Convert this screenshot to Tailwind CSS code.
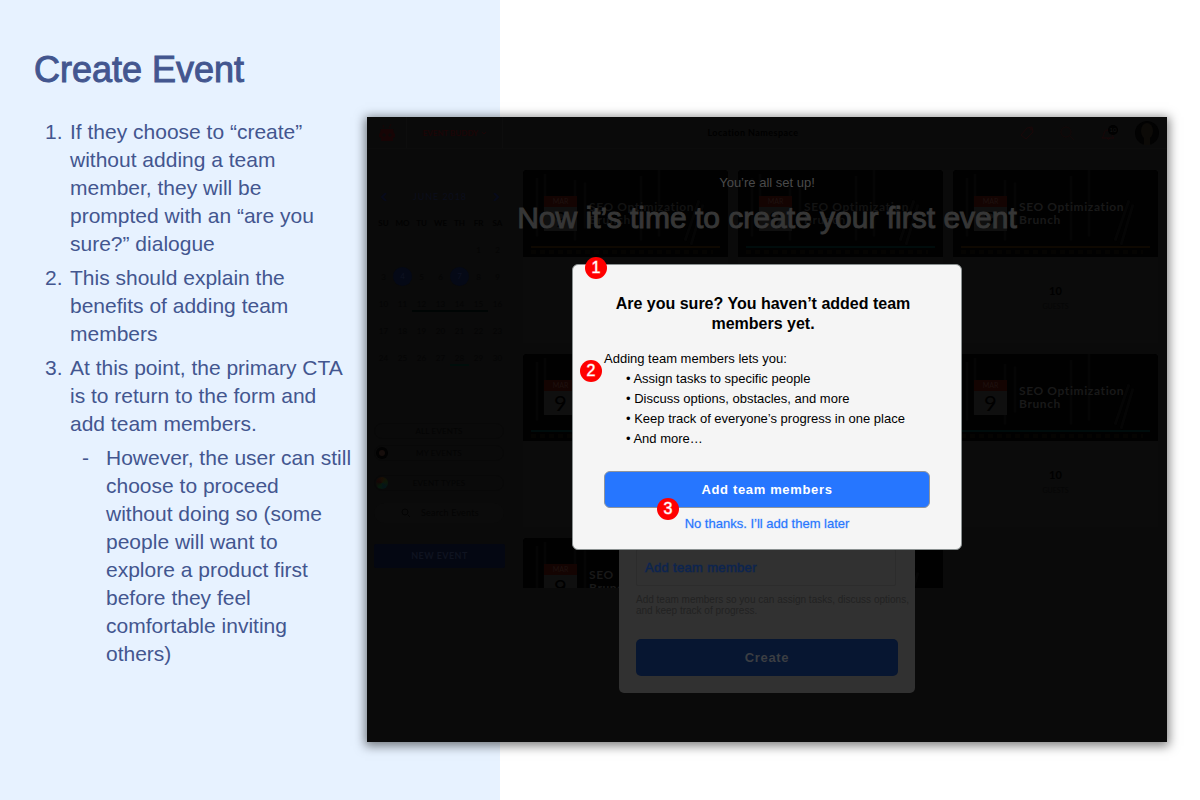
<!DOCTYPE html>
<html lang="en">
<head>
<meta charset="utf-8">
<meta name="viewport" content="width=device-width, initial-scale=1">
<title>Create Event</title>
<script src="https://cdn.jsdelivr.net/npm/@tailwindcss/browser@4"></script>
</head>
<body class="bg-white font-['Liberation_Sans',sans-serif]">
<svg class="hidden" aria-hidden="true">
  <symbol id="shelves" viewBox="0 0 205 86" preserveAspectRatio="none">
    <path d="M0 0H205V86H0Z" fill="#010101"/>
    <path d="M14 8V66M22 4V60M52 10V70M62 12V58M118 6V70M136 0V66M176 30L162 70M180 34L168 74" stroke="#050505" stroke-width="3" fill="none"/>
    <path d="M8 81H190" stroke="#050402" stroke-width="4" stroke-dasharray="5 4" fill="none"/>
  </symbol>
</svg>
<div class="relative flex min-h-screen items-start">
  <div class="absolute inset-y-0 left-0 w-5/12 bg-[#e7f2ff]"></div>

  <aside class="relative w-[367px] shrink-0 pt-12 pb-8 text-[#43568f]">
    <h1 class="pl-[34px] text-4xl leading-[44px] [-webkit-text-stroke:1px_#43568f]">Create Event</h1>
    <ol class="mt-[26px] space-y-[6px] pl-[45px] text-[21px] leading-7">
      <li class="flex"><span class="w-[25px] shrink-0">1.</span><p>If they choose to “create”<br>without adding a team<br>member, they will be<br>prompted with an “are you<br>sure?” dialogue</p></li>
      <li class="flex"><span class="w-[25px] shrink-0">2.</span><p>This should explain the<br>benefits of adding team<br>members</p></li>
      <li class="flex"><span class="w-[25px] shrink-0">3.</span>
        <div>
          <p>At this point, the primary CTA<br>is to return to the form and<br>add team members.</p>
          <ul class="mt-[6px] pl-3"><li class="flex"><span class="w-6 shrink-0">-</span><p class="whitespace-nowrap">However, the user can still<br>choose to proceed<br>without doing so (some<br>people will want to<br>explore a product first<br>before they feel<br>comfortable inviting<br>others)</p></li></ul>
        </div>
      </li>
    </ol>
  </aside>

  <main class="relative mt-[117px] mr-[33px] mb-[58px] min-h-[625px] min-w-0 flex-1 bg-[#0a0a0a] shadow-[0_2px_10px_2px_rgba(0,0,0,0.5)]">
    <!-- Dimmed workspace -->
    <div class="h-[471px] overflow-hidden font-['Lato',sans-serif] text-black">
      <header class="flex h-8 items-center border-b border-[#0c0c0c]">
        <div class="flex h-full w-10 items-center justify-center border-r border-[#0d0d0d]">
          <svg class="h-5 w-5" viewBox="0 0 20 20"><path d="M7 5L6 2M12 5L14 1" stroke="#160506" stroke-width="1"/><path d="M4 6H16L17 10L18 11V14L16 15V18H4V15L2 14V11L3 10Z" fill="#170405"/><path d="M7 10V14M5 12H9M13 10V14M11 12H15" stroke="#0a0a0a" stroke-width="1"/></svg>
        </div>
        <div class="flex h-full w-24 items-center justify-center gap-1 border-r border-[#0d0d0d] text-[8px] font-bold text-[#1c0506]">EVENT BUDDY
          <svg class="h-1 w-1" viewBox="0 0 4 4"><path d="M0 1L2 3L4 1" fill="none" stroke="#1c0506"/></svg></div>
        <div class="flex-1 pr-1 text-center text-[9px] font-bold tracking-wider">Location Namespace</div>
        <div class="flex h-full w-40 items-center justify-end gap-6 pr-2">
          <svg class="h-4 w-4" viewBox="0 0 16 16" fill="none" stroke="#1a0708"><path d="M2 10L8 3L13 2L14 7L7 14Z"/><circle cx="12" cy="4" r="1"/></svg>
          <svg class="h-4 w-4" viewBox="0 0 16 16" fill="none" stroke="#140808"><circle cx="7" cy="7" r="5"/><path d="M11 11L15 15"/></svg>
          <svg class="h-4 w-5" viewBox="0 0 20 16"><path d="M3 13C6 10 4 5 9 5C13 5 12 10 15 13ZM8 13Q9 16 11 13" fill="none" stroke="#1a0708"/><circle cx="14" cy="5" r="5" fill="#010101"/><text x="14" y="7" text-anchor="middle" font-size="6" fill="#161616">10</text></svg>
          <svg class="-ml-2 h-6 w-6" viewBox="0 0 24 24"><circle cx="12" cy="12" r="12" fill="#020202"/><ellipse cx="12" cy="10" rx="6" ry="8" fill="#0c0a07"/><path d="M9 16H15V24H9Z" fill="#0c0a07"/></svg>
        </div>
      </header>

      <div class="flex">
        <aside class="w-[156px] shrink-0 pt-9 pl-[7px]">
          <div class="flex h-6 w-[132px] items-center justify-between px-[7px] text-[9px] tracking-widest text-[#0b0e1c]">
            <button type="button" aria-label="Previous month"><svg class="h-2 w-[6px]" viewBox="0 0 6 8"><path d="M5 0L1 4L5 8" fill="none" stroke="#070a1a" stroke-width="2"/></svg></button>
            <span>JUNE 2018</span>
            <button type="button" aria-label="Next month"><svg class="h-2 w-[6px]" viewBox="0 0 6 8"><path d="M1 0L5 4L1 8" fill="none" stroke="#070a1a" stroke-width="2"/></svg></button>
          </div>
          <table class="w-[133px] table-fixed text-center text-[8px] text-[#050505]">
            <thead><tr class="h-[27px] text-[#020202]"><th>SU</th><th>MO</th><th>TU</th><th>WE</th><th>TH</th><th>FR</th><th>SA</th></tr></thead>
            <tbody>
              <tr class="h-[27px]"><td></td><td></td><td></td><td></td><td></td><td>1</td><td>2</td></tr>
              <tr class="h-[27px]"><td>3</td><td><span class="block size-[19px] rounded-full bg-[#050916] leading-[19px] text-[#0e1222]">4</span></td><td>5</td><td>6</td><td><span class="block size-[19px] rounded-full bg-[#050916] leading-[19px] text-[#0e1222]">7</span></td><td>8</td><td>9</td></tr>
              <tr class="h-[27px]"><td>10</td><td>11</td><td class="bg-[linear-gradient(#000504,#000504)] bg-[length:100%_2px] bg-[position:0_20px] bg-no-repeat">12</td><td class="bg-[linear-gradient(#000504,#000504)] bg-[length:100%_2px] bg-[position:0_20px] bg-no-repeat">13</td><td class="bg-[linear-gradient(#000504,#000504)] bg-[length:100%_2px] bg-[position:0_20px] bg-no-repeat">14</td><td class="bg-[linear-gradient(#000504,#000504)] bg-[length:100%_2px] bg-[position:0_20px] bg-no-repeat">15</td><td>16</td></tr>
              <tr class="h-[27px]"><td>17</td><td>18</td><td>19</td><td>20</td><td>21</td><td>22</td><td>23</td></tr>
              <tr class="h-[27px]"><td>24</td><td>25</td><td>26</td><td>27</td><td class="bg-[linear-gradient(#000e0b,#000e0b)] bg-[length:100%_2px] bg-[position:0_20px] bg-no-repeat">28</td><td>29</td><td>30</td></tr>
            </tbody>
          </table>
          <div class="mt-[52px] flex w-[130px] flex-col text-[8px] tracking-wide">
            <button type="button" class="h-4 rounded-full border border-[#080808] text-[#040404]">ALL EVENTS</button>
            <button type="button" class="mt-[6px] flex h-4 items-center rounded-full border border-[#080808] px-px text-[#040404]"><svg class="size-3" viewBox="0 0 12 12"><circle cx="6" cy="6" r="6" fill="#020202"/><circle cx="6" cy="6" r="3" fill="#160e0c"/></svg><span class="flex-1 pr-3">MY EVENTS</span></button>
            <button type="button" class="mt-[14px] flex h-4 items-center rounded-full border border-[#080808] px-px text-[#040404]"><span class="size-3 rounded-full bg-[conic-gradient(#1a0e04,#0d1808,#041418,#061a0c,#140606,#1a0e04)]"></span><span class="flex-1 pr-3">EVENT TYPES</span></button>
            <label class="mt-3 flex h-5 items-center gap-[10px] rounded-full bg-[#0b0b0b] pl-[27px]">
              <svg class="size-[10px] shrink-0" viewBox="0 0 10 10" fill="none" stroke="#030303"><circle cx="4" cy="4" r="3"/><path d="M7 7L9 9"/></svg>
              <input type="search" aria-label="Search Events" placeholder="Search Events" class="w-full min-w-0 bg-transparent text-[9px] placeholder:text-[#040404]">
            </label>
          </div>
          <button type="button" class="mt-[21px] h-6 w-[131px] rounded-[2px] bg-[#040712] text-[9px] font-bold tracking-wider text-[#0f1320]">NEW EVENT</button>
        </aside>

        <section class="mt-[21px] mr-[9px] grid min-w-0 flex-1 grid-cols-3 gap-x-[10px] gap-y-[11px]">
          <article class="h-[173px] bg-[#0b0b0b]">
            <div class="relative h-[87px] overflow-hidden rounded-t bg-black"><svg class="absolute inset-0 h-full w-full"><use href="#shelves"/></svg>
              <div class="relative mx-2 flex h-[78px] items-start gap-3 border-b-2 border-[#0e0801] pt-[26px] pl-[13px]"><div class="w-[33px] bg-[#0f0f0f] text-center text-[22px] leading-6 text-black"><div class="bg-[#140402] text-[7px] leading-[11px] text-[#1e1210]">MAR</div>9</div><h2 class="pt-1 text-[12px] leading-[13px] font-bold tracking-wider whitespace-nowrap text-[#131313]">SEO Optimization<br>Brunch</h2></div>
            </div>
          </article>
          <article class="h-[173px] bg-[#0b0b0b]">
            <div class="relative h-[87px] overflow-hidden rounded-t bg-black"><svg class="absolute inset-0 h-full w-full"><use href="#shelves"/></svg>
              <div class="relative mx-2 flex h-[78px] items-start gap-3 border-b-2 border-[#000c0c] pt-[26px] pl-[13px]"><div class="w-[33px] bg-[#0f0f0f] text-center text-[22px] leading-6 text-black"><div class="bg-[#140402] text-[7px] leading-[11px] text-[#1e1210]">MAR</div>9</div><h2 class="pt-1 text-[12px] leading-[13px] font-bold tracking-wider whitespace-nowrap text-[#131313]">SEO Optimization<br>Brunch</h2></div>
            </div>
          </article>
          <article class="h-[173px] bg-[#0b0b0b]">
            <div class="relative h-[87px] overflow-hidden rounded-t bg-black"><svg class="absolute inset-0 h-full w-full"><use href="#shelves"/></svg>
              <div class="relative mx-2 flex h-[78px] items-start gap-3 border-b-2 border-[#0e0801] pt-[26px] pl-[13px]"><div class="w-[33px] bg-[#0f0f0f] text-center text-[22px] leading-6 text-black"><div class="bg-[#140402] text-[7px] leading-[11px] text-[#1e1210]">MAR</div>9</div><h2 class="pt-1 text-[12px] leading-[13px] font-bold tracking-wider whitespace-nowrap text-[#191919]">SEO Optimization<br>Brunch</h2></div>
            </div>
            <p class="pt-7 text-center text-[11px] leading-3 font-bold">10</p><p class="mt-1 text-center text-[7px] text-[#060606]">GUESTS</p>
          </article>
          <article class="h-[173px] bg-[#0b0b0b]">
            <div class="relative h-[87px] overflow-hidden rounded-t bg-black"><svg class="absolute inset-0 h-full w-full"><use href="#shelves"/></svg>
              <div class="relative mx-2 flex h-[78px] items-start gap-3 border-b-2 border-[#000c0c] pt-[26px] pl-[13px]"><div class="w-[33px] bg-[#0f0f0f] text-center text-[22px] leading-6 text-black"><div class="bg-[#140402] text-[7px] leading-[11px] text-[#1e1210]">MAR</div>9</div></div>
            </div>
          </article>
          <article class="h-[173px] bg-[#0b0b0b]">
            <div class="relative h-[87px] overflow-hidden rounded-t bg-black"><svg class="absolute inset-0 h-full w-full"><use href="#shelves"/></svg></div>
          </article>
          <article class="h-[173px] bg-[#0b0b0b]">
            <div class="relative h-[87px] overflow-hidden rounded-t bg-black"><svg class="absolute inset-0 h-full w-full"><use href="#shelves"/></svg>
              <div class="relative mx-2 flex h-[78px] items-start gap-3 border-b-2 border-[#000c0c] pt-[26px] pl-[13px]"><div class="w-[33px] bg-[#0f0f0f] text-center text-[22px] leading-6 text-black"><div class="bg-[#140402] text-[7px] leading-[11px] text-[#1e1210]">MAR</div>9</div><h2 class="pt-1 text-[12px] leading-[13px] font-bold tracking-wider whitespace-nowrap text-[#191919]">SEO Optimization<br>Brunch</h2></div>
            </div>
            <p class="pt-7 text-center text-[11px] leading-3 font-bold">10</p><p class="mt-1 text-center text-[7px] text-[#060606]">GUESTS</p>
          </article>
          <article class="h-[173px] bg-[#0b0b0b]">
            <div class="relative h-[87px] overflow-hidden rounded-t bg-black"><svg class="absolute inset-0 h-full w-full"><use href="#shelves"/></svg>
              <div class="relative mx-2 flex h-[78px] items-start gap-3 pt-[26px] pl-[13px]"><div class="w-[33px] bg-[#0f0f0f] text-center text-[22px] leading-6 text-black"><div class="bg-[#140402] text-[7px] leading-[11px] text-[#1e1210]">MAR</div>9</div><h2 class="pt-1 text-[12px] leading-[13px] font-bold tracking-wider whitespace-nowrap text-[#191919]">SEO<br>Brunch</h2></div>
            </div>
          </article>
          <article class="h-[173px] bg-[#0b0b0b]">
            <div class="relative h-[87px] overflow-hidden rounded-t bg-black"><svg class="absolute inset-0 h-full w-full"><use href="#shelves"/></svg></div>
          </article>
        </section>
      </div>
    </div>

    <!-- Event form layer -->
    <section class="absolute inset-x-0 top-0 flex flex-col items-center pt-14 text-[#363636]">
      <p class="text-[13px] leading-5 text-[#4a4a4a]">You’re all set up!</p>
      <h2 class="mt-[7px] text-[30px] leading-9 whitespace-nowrap [-webkit-text-stroke:1px_#363636]">Now it’s time to create your first event</h2>
      <form class="mt-[41px] flex h-[416px] w-[296px] flex-col justify-end rounded-[5px] bg-[#313131] px-[17px] pb-[17px]">
        <button type="button" class="h-[37px] w-[260px] rounded-[2px] border border-[#2c2c2c] px-2 text-left text-[13px] text-[#0c2450] [-webkit-text-stroke:1px_#0c245080]"><span class="tracking-wide">Add team member</span></button>
        <p class="mt-2 text-[10px] leading-[11px] whitespace-nowrap text-[#222]">Add team members so you can assign tasks, discuss options,<br>and keep track of progress.</p>
        <button type="button" class="mt-[23px] h-[37px] rounded-[5px] bg-[#071631] text-[13px] font-bold tracking-wider text-[#3b3e43]">Create</button>
      </form>
    </section>

    <!-- Confirmation dialog -->
    <div role="dialog" aria-labelledby="confirm-title" class="absolute top-[147px] left-1/2 w-[390px] -translate-x-1/2 rounded-md border border-[#8a9090] bg-[#f5f5f5] px-[31px] pt-[29px] pb-[15px] text-black">
      <h3 id="confirm-title" class="pr-2 text-center text-base leading-5 font-bold whitespace-nowrap">Are you sure? You haven’t added team<br>members yet.</h3>
      <div class="mt-[15px] text-[13px] leading-5 whitespace-nowrap">
        <p>Adding team members lets you:</p>
        <ul class="pl-[22px]">
          <li>• Assign tasks to specific people</li>
          <li>• Discuss options, obstacles, and more</li>
          <li>• Keep track of everyone’s progress in one place</li>
          <li>• And more…</li>
        </ul>
      </div>
      <button type="button" class="mt-[22px] block h-[37px] w-full rounded-md border border-[#8f949c] bg-[#2676ff] text-[13px] font-bold tracking-wider text-white">Add team members</button>
      <a href="#" class="mt-[6px] block text-center text-[13px] leading-5 text-[#2676ff] [-webkit-text-stroke:1px_#2676ff40]">No thanks. I’ll add them later</a>
      <span class="absolute -top-2 left-3 size-[22px] rounded-full bg-[#ff0000] text-center text-base leading-[22px] text-white [-webkit-text-stroke:1px_#ffffff80]">1</span>
      <span class="absolute top-[95px] left-[7px] size-[22px] rounded-full bg-[#ff0000] text-center text-base leading-[22px] text-white [-webkit-text-stroke:1px_#ffffff80]">2</span>
      <span class="absolute top-[233px] left-[84px] size-[22px] rounded-full bg-[#ff0000] text-center text-base leading-[22px] text-white [-webkit-text-stroke:1px_#ffffff80]">3</span>
    </div>
  </main>
</div>
</body>
</html>
